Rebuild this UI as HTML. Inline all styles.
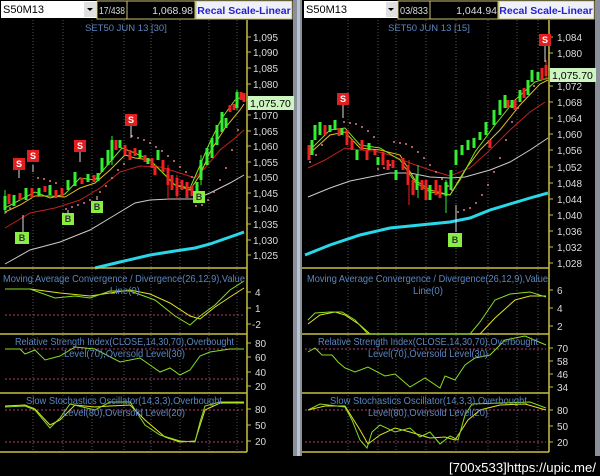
<!DOCTYPE html>
<html><head><meta charset="utf-8"><style>
html,body{margin:0;padding:0;background:#000;width:600px;height:476px;overflow:hidden}
svg{display:block}
text{font-family:"Liberation Sans",sans-serif}
</style></head><body>
<svg width="600" height="476" viewBox="0 0 600 476" xmlns="http://www.w3.org/2000/svg">
<rect width="600" height="476" fill="#000"/>
<rect x="293" y="0" width="9" height="456" fill="#8a8f99"/>
<rect x="297" y="0" width="3" height="456" fill="#b8c4d4"/>
<rect x="595" y="0" width="5" height="456" fill="#8a8f99"/>

<rect x="1" y="1" width="96" height="17" fill="#fff"/>
<text x="3" y="13" font-size="11" fill="#000">S50M13</text>
<rect x="84" y="2" width="12" height="15" fill="#e0e0e0"/>
<path d="M87 8 L93 8 L90 11Z" fill="#000"/>
<rect x="97" y="1" width="30" height="18" fill="#000" stroke="#c8c070" stroke-width="1"/>
<text x="99" y="14" font-size="10.5" fill="#ddd" textLength="26" lengthAdjust="spacingAndGlyphs">17/438</text>
<rect x="127" y="1" width="68" height="18" fill="#000" stroke="#c8c070" stroke-width="1"/>
<text x="193" y="14" font-size="10.5" fill="#ddd" text-anchor="end">1,068.98</text>
<rect x="196" y="1" width="96" height="18" fill="#f0f0f8" stroke="#c8c070"/>
<text x="244" y="14" font-size="10.5" fill="#2222cc" font-weight="bold" text-anchor="middle">Recal Scale-Linear</text>
<text x="85" y="31" font-size="9.5" fill="#5b86c0">SET50 JUN 13  [30]</text>

<g stroke="#555" stroke-dasharray="1,2" stroke-width="1">
<path d="M33 20V452M63 20V452M92 20V452M124 20V452M151 20V452M180 20V452M209 20V452M237 20V452"/>
</g>
<path d="M247 20V452" stroke="#c8c040" stroke-width="1.5"/>
<g font-size="10" fill="#ddd">
<text x="253" y="41">1,095</text><text x="253" y="56">1,090</text><text x="253" y="72">1,085</text><text x="253" y="88">1,080</text>
<text x="253" y="119">1,070</text><text x="253" y="135">1,065</text><text x="253" y="150">1,060</text><text x="253" y="166">1,055</text>
<text x="253" y="181">1,050</text><text x="253" y="197">1,045</text><text x="253" y="212">1,040</text><text x="253" y="228">1,035</text>
<text x="253" y="244">1,030</text><text x="253" y="259">1,025</text>
</g>
<g stroke="#c8c040"><path d="M247 37h4M247 52h4M247 68h4M247 84h4M247 100h4M247 115h4M247 131h4M247 146h4M247 162h4M247 177h4M247 193h4M247 208h4M247 224h4M247 240h4M247 255h4"/></g>
<rect x="248" y="96" width="46" height="14" fill="#ccf5c0"/>
<text x="250" y="107" font-size="10.5" fill="#000">1,075.70</text>

<polyline fill="none" stroke="#28d8e8" stroke-width="3" points="95,268 120,262 150,255 175,251 195,248 210,244 230,237 244,232"/>
<polyline fill="none" stroke="#ccc" stroke-width="1" points="5,264 30,250 60,242 90,230 115,215 135,203 150,200 170,199 195,199 210,193 230,183 244,175"/>
<polyline fill="none" stroke="#c02020" stroke-width="1" points="5,228 30,213 55,208 80,200 100,188 120,172 140,166 160,167 180,173 195,178 205,168 220,150 235,138 244,130"/>
<polyline fill="none" stroke="#e0c020" stroke-width="1" points="5,212 20,205 35,196 50,196 65,197 80,188 95,183 110,170 125,155 135,158 150,160 160,170 175,185 190,190 200,175 210,152 225,128 240,110 244,104"/>
<polyline fill="none" stroke="#7de020" stroke-width="1" points="5,208 20,200 35,192 50,198 65,194 80,178 95,180 110,162 122,148 135,153 150,160 160,170 175,185 190,188 198,170 210,142 222,118 235,100 244,96"/>
<g fill="#d88080">
<circle cx="6" cy="212" r="1"/><circle cx="10" cy="208" r="1"/><circle cx="38" cy="178" r="1"/><circle cx="44" cy="179" r="1"/><circle cx="50" cy="181" r="1"/><circle cx="56" cy="183" r="1"/>
<circle cx="66" cy="209" r="1"/><circle cx="72" cy="207" r="1"/><circle cx="78" cy="205" r="1"/><circle cx="84" cy="203" r="1"/><circle cx="90" cy="200" r="1"/>
<circle cx="100" cy="192" r="1"/><circle cx="106" cy="186" r="1"/><circle cx="112" cy="178" r="1"/><circle cx="118" cy="170" r="1"/><circle cx="124" cy="164" r="1"/>
<circle cx="132" cy="136" r="1"/><circle cx="138" cy="138" r="1"/><circle cx="144" cy="140" r="1"/><circle cx="150" cy="143" r="1"/><circle cx="156" cy="147" r="1"/><circle cx="162" cy="151" r="1"/><circle cx="168" cy="156" r="1"/><circle cx="174" cy="161" r="1"/><circle cx="180" cy="167" r="1"/><circle cx="186" cy="172" r="1"/><circle cx="192" cy="177" r="1"/>
<circle cx="196" cy="206" r="1"/><circle cx="202" cy="205" r="1"/><circle cx="208" cy="200" r="1"/><circle cx="214" cy="192" r="1"/><circle cx="220" cy="180" r="1"/><circle cx="226" cy="168" r="1"/><circle cx="232" cy="150" r="1"/><circle cx="238" cy="130" r="1"/>
</g>
<g stroke-width="3">
<path stroke="#33ee33" d="M5 196V210M14 195V206M26 188V200M39 188V196M50 185V195M68 180V190M75 172V186M88 174V182M98 173V181M102 158V172M108 150V165M112 140V160M120 140V148M140 150V158M148 158V164M158 150V160M197 182V196M201 160V180M207 148V165M212 138V158M217 125V145M222 112V132M226 118V128M237 92V108"/>
<path stroke="#ee2222" d="M9 194V204M20 193V200M32 188V198M45 186V192M56 190V198M62 188V196M82 178V184M94 175V182M116 140V150M125 145V155M130 150V160M135 148V156M145 155V162M152 158V168M155 165V175M163 160V172M168 168V185M172 175V190M177 178V196M182 180V190M187 182V198M192 185V196M230 105V112M234 104V110M241 92V100M244 93V102"/>
</g>
<g stroke-width="1">
<path stroke="#33ee33" d="M5 190V214M112 136V165M201 155V185M237 90V110"/>
<path stroke="#ee2222" d="M168 165V200M177 175V200"/>
</g>
<g font-size="9" font-weight="bold" text-anchor="middle">
<path d="M19 168V178M33 165V172M80 151V162M131 124V138M23 215V232M68 210V215M97 196V200" stroke="#ddd" stroke-width="1"/>
<rect x="13" y="158" width="12" height="12" fill="#e02020"/><text x="19" y="167" fill="#fff">S</text>
<rect x="27" y="150" width="12" height="12" fill="#e02020"/><text x="33" y="159" fill="#fff">S</text>
<rect x="74" y="140" width="12" height="12" fill="#e02020"/><text x="80" y="149" fill="#fff">S</text>
<rect x="125" y="114" width="12" height="12" fill="#e02020"/><text x="131" y="123" fill="#fff">S</text>
<rect x="15" y="232" width="14" height="12" fill="#88ee44"/><text x="22" y="241" fill="#333">B</text>
<rect x="62" y="213" width="12" height="12" fill="#88ee44"/><text x="68" y="222" fill="#333">B</text>
<rect x="91" y="201" width="12" height="12" fill="#88ee44"/><text x="97" y="210" fill="#333">B</text>
<rect x="193" y="191" width="12" height="12" fill="#88ee44"/><text x="199" y="200" fill="#333">B</text>
</g>

<path d="M0 268H247M0 334H247M0 393H247M0 452H247" stroke="#c8c040" stroke-width="1.5"/>
<g stroke="#c8c040"><path d="M247 292h4M247 308h4M247 324h4M247 343h4M247 357h4M247 372h4M247 386h4M247 409h4M247 425h4M247 441h4"/></g>
<g font-size="10" fill="#ddd">
<text x="255" y="296">4</text><text x="255" y="312">1</text><text x="252" y="328">-2</text>
<text x="255" y="347">80</text><text x="255" y="361">60</text><text x="255" y="376">40</text><text x="255" y="390">20</text>
<text x="255" y="413">80</text><text x="255" y="429">50</text><text x="255" y="445">20</text>
</g>
<g fill="none" stroke="#b04070" stroke-dasharray="2,2"><path d="M5 315H244M5 349H244M5 379H244M5 410H244M5 442H244"/></g>
<g fill="none" stroke-width="1">
<polyline stroke="#e0e020" points="5,289 30,289 60,293 90,296 110,293 130,290 150,294 170,303 190,316 200,319 215,307 230,297 244,288"/>
<polyline stroke="#88dd22" points="5,289 30,289 55,298 75,296 90,298 110,291 130,291 155,300 175,316 190,325 200,316 215,305 230,290 244,281"/>
<polyline stroke="#88dd22" points="5,349 20,349 25,354 35,350 45,360 60,356 75,347 95,349 120,362 140,358 160,372 170,368 180,375 190,370 200,356 210,352 230,349 244,349"/>
<polyline stroke="#e0e020" points="5,406 25,405 35,409 50,425 60,420 75,405 95,407 110,406 130,405 145,420 165,437 180,442 195,441 205,410 220,403 244,403"/>
<polyline stroke="#88dd22" points="5,407 25,406 35,410 50,428 60,418 70,404 95,410 110,402 130,402 145,425 160,435 180,441 195,442 200,422 205,406 220,402 244,402"/>
</g>
<g font-size="10.5" fill="#5b86c0" lengthAdjust="spacingAndGlyphs">
<text x="3" y="282" textLength="242" lengthAdjust="spacingAndGlyphs">Moving Average Convergence / Divergence(26,12,9),Value</text>
<text x="110" y="294" textLength="30" lengthAdjust="spacingAndGlyphs">Line(0)</text>
<text x="15" y="345" textLength="219" lengthAdjust="spacingAndGlyphs">Relative Strength Index(CLOSE,14,30,70),Overbought</text>
<text x="64" y="357" textLength="121" lengthAdjust="spacingAndGlyphs">Level(70),Oversold Level(30)</text>
<text x="26" y="404" textLength="196" lengthAdjust="spacingAndGlyphs">Slow Stochastics Oscillator(14,3,3),Overbought</text>
<text x="63" y="416" textLength="122" lengthAdjust="spacingAndGlyphs">Level(80),Oversold Level(20)</text>
</g>

<rect x="304" y="1" width="94" height="17" fill="#fff"/>
<text x="306" y="13" font-size="11" fill="#000">S50M13</text>
<rect x="386" y="2" width="11" height="15" fill="#e0e0e0"/>
<path d="M388 8 L394 8 L391 11Z" fill="#000"/>
<rect x="398" y="1" width="32" height="18" fill="#000" stroke="#c8c070"/>
<text x="400" y="14" font-size="10.5" fill="#ddd" textLength="28" lengthAdjust="spacingAndGlyphs">03/833</text>
<rect x="430" y="1" width="68" height="18" fill="#000" stroke="#c8c070"/>
<text x="497" y="14" font-size="10.5" fill="#ddd" text-anchor="end">1,044.94</text>
<rect x="499" y="1" width="95" height="18" fill="#f0f0f8" stroke="#c8c070"/>
<text x="546" y="14" font-size="10.5" fill="#2222cc" font-weight="bold" text-anchor="middle">Recal Scale-Linear</text>
<text x="388" y="31" font-size="9.5" fill="#5b86c0">SET50 JUN 13  [15]</text>

<g stroke="#555" stroke-dasharray="1,2">
<path d="M348 20V452M378 20V452M396 20V452M426 20V452M456 20V452M488 20V452M517 20V452M538 20V452"/>
</g>
<path d="M549 20V452" stroke="#c8c040" stroke-width="1.5"/>
<g font-size="10" fill="#ddd">
<text x="557" y="41">1,084</text><text x="557" y="57">1,080</text><text x="557" y="106">1,068</text><text x="557" y="122">1,064</text>
<text x="557" y="138">1,060</text><text x="557" y="154">1,056</text><text x="557" y="171">1,052</text><text x="557" y="187">1,048</text>
<text x="557" y="203">1,044</text><text x="557" y="219">1,040</text><text x="557" y="235">1,036</text><text x="557" y="251">1,032</text>
<text x="557" y="267">1,028</text><text x="557" y="90">1,072</text>
</g>
<g stroke="#c8c040"><path d="M549 37h4M549 53h4M549 69h4M549 86h4M549 102h4M549 118h4M549 134h4M549 150h4M549 167h4M549 183h4M549 199h4M549 215h4M549 231h4M549 247h4M549 263h4"/></g>
<rect x="550" y="68" width="46" height="14" fill="#ccf5c0"/>
<text x="552" y="79" font-size="10.5" fill="#000">1,075.70</text>

<polyline fill="none" stroke="#28d8e8" stroke-width="3" points="305,255 330,245 360,235 390,228 420,225 450,222 470,218 490,210 510,204 530,198 548,193"/>
<polyline fill="none" stroke="#ccc" stroke-width="1" points="308,197 330,188 350,181 370,177 390,173 410,173 430,177 450,178 465,177 490,170 510,162 530,150 548,138"/>
<polyline fill="none" stroke="#c02020" stroke-width="1" points="308,168 325,160 345,148 360,150 375,151 390,155 410,163 430,170 450,176 470,168 490,150 510,130 530,112 545,102"/>
<polyline fill="none" stroke="#e0c020" stroke-width="1" points="308,155 330,135 345,132 360,148 380,150 400,155 415,180 430,190 450,195 465,170 480,150 500,130 520,105 540,84 548,80"/>
<polyline fill="none" stroke="#7de020" stroke-width="1" points="308,152 330,130 345,128 360,145 380,148 400,160 415,182 430,192 450,195 460,180 475,152 495,125 515,100 535,82 548,78"/>
<g fill="#d88080">
<circle cx="310" cy="162" r="1"/><circle cx="316" cy="155" r="1"/><circle cx="322" cy="145" r="1"/>
<circle cx="344" cy="122" r="1"/><circle cx="350" cy="123" r="1"/><circle cx="356" cy="124" r="1"/><circle cx="362" cy="127" r="1"/><circle cx="368" cy="131" r="1"/><circle cx="374" cy="137" r="1"/>
<circle cx="378" cy="169" r="1"/><circle cx="384" cy="168" r="1"/><circle cx="390" cy="165" r="1"/>
<circle cx="394" cy="142" r="1"/><circle cx="400" cy="143" r="1"/><circle cx="406" cy="144" r="1"/><circle cx="412" cy="147" r="1"/><circle cx="418" cy="152" r="1"/><circle cx="424" cy="158" r="1"/><circle cx="430" cy="165" r="1"/><circle cx="436" cy="172" r="1"/><circle cx="442" cy="179" r="1"/><circle cx="448" cy="186" r="1"/><circle cx="452" cy="190" r="1"/>
<circle cx="458" cy="212" r="1"/><circle cx="464" cy="210" r="1"/><circle cx="470" cy="208" r="1"/><circle cx="476" cy="203" r="1"/><circle cx="482" cy="195" r="1"/><circle cx="488" cy="185" r="1"/><circle cx="494" cy="172" r="1"/><circle cx="500" cy="158" r="1"/><circle cx="506" cy="140" r="1"/><circle cx="512" cy="122" r="1"/><circle cx="518" cy="108" r="1"/><circle cx="528" cy="94" r="1"/><circle cx="534" cy="86" r="1"/>
</g>
<g stroke-width="3">
<path stroke="#33ee33" d="M312 140V155M315 125V140M320 122V135M330 125V132M335 120V130M342 128V135M357 150V160M369 143V150M378 157V165M396 170V180M417 175V190M430 185V200M446 182V196M451 170V190M456 150V165M462 145V155M468 140V150M474 138V148M480 132V140M486 122V135M494 110V125M500 100V115M505 95V108M512 100V108M520 90V102M528 80V95M532 70V82M538 72V80"/>
<path stroke="#ee2222" d="M309 145V160M325 125V135M339 128V136M347 130V145M352 140V150M362 140V150M367 150V160M375 150V155M383 152V165M388 160V170M393 160V168M403 158V170M408 165V185M413 180V195M422 180V190M426 180V200M436 180V195M440 185V198M490 140V148M508 100V108M515 100V110M524 88V98M542 68V80M546 65V76"/>
</g>
<g stroke-width="1"><path stroke="#33ee33" d="M446 180V213M418 165V198"/><path stroke="#ee2222" d="M409 160V205M546 60V80"/></g>
<g font-size="9" font-weight="bold" text-anchor="middle">
<path d="M343 104V118M456 205V232M545 45V62" stroke="#ddd"/>
<rect x="337" y="93" width="12" height="12" fill="#e02020"/><text x="343" y="102" fill="#fff">S</text>
<rect x="539" y="34" width="12" height="12" fill="#e02020"/><text x="545" y="43" fill="#fff">S</text>
<rect x="448" y="233" width="14" height="14" fill="#88ee44"/><text x="455" y="243" fill="#333">B</text>
</g>

<path d="M302 268H549M302 334H549M302 393H549M302 452H549" stroke="#c8c040" stroke-width="1.5"/>
<g stroke="#c8c040"><path d="M549 290h4M549 308h4M549 326h4M549 348h4M549 361h4M549 374h4M549 387h4M549 410h4M549 426h4M549 442h4"/></g>
<g font-size="10" fill="#ddd">
<text x="557" y="294">6</text><text x="557" y="312">4</text><text x="557" y="330">2</text>
<text x="557" y="352">70</text><text x="557" y="365">58</text><text x="557" y="378">46</text><text x="557" y="391">34</text>
<text x="557" y="414">80</text><text x="557" y="430">50</text><text x="557" y="446">20</text>
</g>
<g fill="none" stroke="#b04070" stroke-dasharray="2,2"><path d="M305 349H546M305 410H546M305 442H546"/></g>
<g fill="none">
<polyline stroke="#e0e020" points="308,324 320,315 335,312 345,315 360,325 370,334 420,334 480,334 495,318 515,300 530,296 546,296"/>
<polyline stroke="#88dd22" points="308,320 315,313 330,312 342,312 355,320 368,334 470,334 480,322 495,300 510,294 530,292 546,297"/>
<polyline stroke="#88dd22" points="308,352 315,348 322,355 332,355 338,362 345,368 355,372 368,367 385,376 395,374 410,387 425,378 440,388 445,376 455,380 465,365 475,358 490,355 505,340 525,336 546,345"/>
<polyline stroke="#e0e020" points="308,410 325,406 345,406 360,430 368,444 380,435 395,428 410,432 430,438 445,437 455,440 468,420 480,410 500,405 525,404 546,410"/>
<polyline stroke="#88dd22" points="308,410 320,404 345,407 352,420 360,440 367,448 372,432 380,425 395,432 410,428 420,437 430,432 440,444 450,436 458,440 465,415 472,404 500,403 530,402 546,408"/>
</g>
<g font-size="10.5" fill="#5b86c0">
<text x="307" y="282" textLength="241" lengthAdjust="spacingAndGlyphs">Moving Average Convergence / Divergence(26,12,9),Value</text>
<text x="413" y="294" textLength="30" lengthAdjust="spacingAndGlyphs">Line(0)</text>
<text x="318" y="345" textLength="220" lengthAdjust="spacingAndGlyphs">Relative Strength Index(CLOSE,14,30,70),Overbought</text>
<text x="368" y="357" textLength="120" lengthAdjust="spacingAndGlyphs">Level(70),Oversold Level(30)</text>
<text x="330" y="404" textLength="197" lengthAdjust="spacingAndGlyphs">Slow Stochastics Oscillator(14,3,3),Overbought</text>
<text x="368" y="416" textLength="120" lengthAdjust="spacingAndGlyphs">Level(80),Oversold Level(20)</text>
</g>

<rect x="0" y="456" width="600" height="20" fill="#000"/>
<text x="449" y="472" font-size="13" fill="#fff" font-family="Liberation Mono,monospace" textLength="147" lengthAdjust="spacingAndGlyphs">[700x533]https://upic.me/</text>
</svg>
</body></html>
